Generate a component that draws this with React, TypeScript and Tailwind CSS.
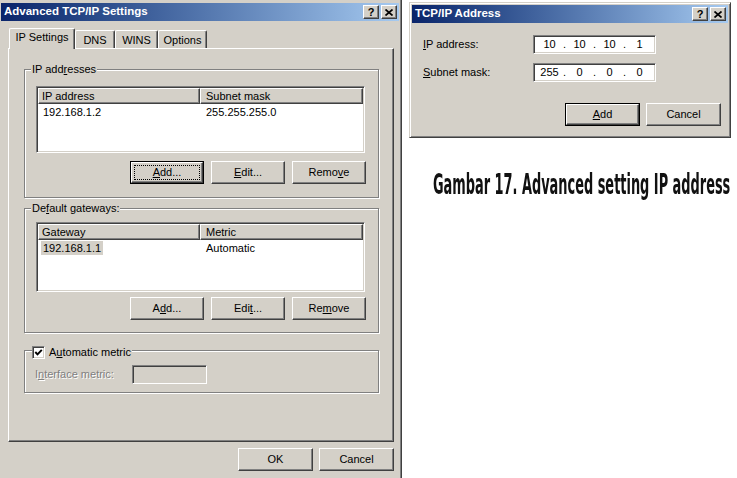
import type { ReactNode } from 'react'

const ui = "font-['Liberation_Sans',Arial,sans-serif] text-[11px] leading-[13px] text-black"
const raised =
  'border border-t-white border-l-white border-r-[#404040] border-b-[#404040] shadow-[inset_-1px_-1px_0_#808080]'
const sunken =
  'border border-t-[#808080] border-l-[#808080] border-r-white border-b-white shadow-[inset_1px_1px_0_#404040,inset_-1px_-1px_0_#d4d0c8]'
const etched = 'border border-[#808080] shadow-[inset_1px_1px_0_white,1px_1px_0_white]'

function CapBtn({ children }: { children: ReactNode }) {
  return (
    <span className={`flex h-[14px] w-[16px] items-center justify-center bg-[#d4d0c8] ${raised}`}>{children}</span>
  )
}

function TitleBar({ title }: { title: string }) {
  return (
    <div className="flex h-[18px] shrink-0 items-center bg-linear-to-r from-[#0a246a] to-[#a6caf0] pl-[3px] pr-[2px]">
      <span className="flex-1 text-[11.5px] font-bold leading-none text-white">{title}</span>
      <div className="flex gap-[2px]">
        <CapBtn>
          <span className="text-[11px] font-bold leading-none">?</span>
        </CapBtn>
        <CapBtn>
          <svg width="8" height="7" viewBox="0 0 8 7">
            <path d="M0.5 0.5 L7.5 6.5 M7.5 0.5 L0.5 6.5" stroke="#000" strokeWidth="1.7" fill="none" />
          </svg>
        </CapBtn>
      </div>
    </div>
  )
}

function Btn(props: { children: ReactNode; def?: boolean; focus?: boolean; className?: string }) {
  return (
    <button
      className={`flex h-[23px] bg-[#d4d0c8] ${props.def ? 'border border-black' : ''} ${props.className ?? 'w-[74px]'}`}
    >
      <span className={`flex flex-1 items-center justify-center ${raised}`}>
        {props.focus ? (
          <span className="m-[2px] flex flex-1 self-stretch items-center justify-center border border-dotted border-black">
            {props.children}
          </span>
        ) : (
          props.children
        )}
      </span>
    </button>
  )
}

function ListView(props: { cols: [string, string]; row: [string, string]; sel?: boolean; className: string }) {
  return (
    <div className={`flex flex-col bg-white ${sunken} ${props.className}`}>
      <div className="mx-px mt-px flex h-[16px]">
        <div className={`flex w-[162px] items-center bg-[#d4d0c8] pl-[3px] ${raised}`}>{props.cols[0]}</div>
        <div className={`flex flex-1 items-center bg-[#d4d0c8] pl-[5px] ${raised}`}>{props.cols[1]}</div>
      </div>
      <div className="mx-px mt-px flex h-[14px] items-center">
        <div className="w-[162px] pl-[3px]">
          <span className={`px-[2px] py-px ${props.sel ? 'bg-[#d4d0c8]' : ''}`}>{props.row[0]}</span>
        </div>
        <div className="flex-1 pl-[6px]">{props.row[1]}</div>
      </div>
    </div>
  )
}

function Group(props: { label: ReactNode; className: string; children: ReactNode }) {
  return (
    <div className={`relative ${etched} ${props.className}`}>
      <span className="absolute -top-[7px] left-[6px] bg-[#d4d0c8] px-px">{props.label}</span>
      {props.children}
    </div>
  )
}

function Tab(props: { label: string; active?: boolean; className: string }) {
  if (props.active) {
    return (
      <div
        className={`relative z-10 -mb-px flex h-[21px] items-center justify-center rounded-t-[2px] border-t border-l border-r border-t-white border-l-white border-r-[#404040] bg-[#d4d0c8] pb-[3px] shadow-[inset_-1px_0_0_#808080] ${props.className}`}
      >
        {props.label}
      </div>
    )
  }
  return (
    <div
      className={`flex h-[18px] items-center justify-center rounded-t-[2px] border-t border-l border-r border-t-white border-l-white border-r-[#404040] bg-[#d4d0c8] pt-[1px] shadow-[inset_-1px_0_0_#808080] ${props.className}`}
    >
      {props.label}
    </div>
  )
}

function AdvancedDialog() {
  return (
    <div className="flex h-[478px] w-[402px] shrink-0 flex-col border-r border-r-[#404040] bg-[#d4d0c8] pt-[3px] pr-[2px] pl-[1px] shadow-[inset_-1px_0_0_#808080]">
      <TitleBar title="Advanced TCP/IP Settings" />

      <div className="mt-[7px] ml-[8px] flex h-[20px] items-end">
        <Tab label="IP Settings" active className="w-[66px]" />
        <Tab label="DNS" className="w-[40px]" />
        <Tab label="WINS" className="w-[43px]" />
        <Tab label="Options" className="w-[49px]" />
      </div>

      <div className={`ml-[7px] flex h-[394px] w-[386px] flex-col pt-[20px] pr-[14px] pl-[15px] ${raised}`}>
        <Group
          className="h-[129px] pt-[16px] pr-[12px] pl-[11px]"
          label={<>IP add<u>r</u>esses</>}
        >
          <ListView className="h-[67px] w-[329px]" cols={['IP address', 'Subnet mask']} row={['192.168.1.2', '255.255.255.0']} />
          <div className="mt-[8px] flex justify-end gap-[7px]">
            <Btn def focus>
              <u>A</u>dd...
            </Btn>
            <Btn>
              <u>E</u>dit...
            </Btn>
            <Btn>
              Remo<u>v</u>e
            </Btn>
          </div>
        </Group>

        <Group
          className="mt-[10px] h-[125px] pt-[13px] pr-[12px] pl-[11px]"
          label={<>De<u>f</u>ault gateways:</>}
        >
          <ListView className="h-[70px] w-[329px]" cols={['Gateway', 'Metric']} row={['192.168.1.1', 'Automatic']} sel />
          <div className="mt-[5px] flex justify-end gap-[7px]">
            <Btn>
              A<u>d</u>d...
            </Btn>
            <Btn>
              Edi<u>t</u>...
            </Btn>
            <Btn>
              Re<u>m</u>ove
            </Btn>
          </div>
        </Group>

        <div className={`relative mt-[17px] flex h-[43px] items-start pt-[14px] pl-[10px] ${etched}`}>
          <div className="absolute -top-[5px] left-[7px] flex h-[13px] items-center gap-[4px] bg-[#d4d0c8] pr-px">
            <span className={`flex h-[13px] w-[13px] items-center justify-center bg-white ${sunken}`}>
              <svg width="9" height="9" viewBox="0 0 9 9">
                <path d="M1.3 4 L3.5 6.4 L7.8 1.8" stroke="#000" strokeWidth="1.9" fill="none" />
              </svg>
            </span>
            <span>
              A<u>u</u>tomatic metric
            </span>
          </div>
          <span className="mt-[3px] w-[97px] text-[#808080] [text-shadow:1px_1px_0_white]">
            I<u>n</u>terface metric:
          </span>
          <span className={`h-[19px] w-[75px] bg-[#d4d0c8] ${sunken}`} />
        </div>
      </div>

      <div className="mt-[6px] ml-[7px] flex w-[386px] justify-end gap-[6px]">
        <Btn className="w-[75px]">OK</Btn>
        <Btn className="w-[75px]">Cancel</Btn>
      </div>
    </div>
  )
}

function IpField({ parts }: { parts: string[] }) {
  return (
    <div className={`flex h-[19px] w-[123px] items-center bg-white pl-[3px] ${sunken}`}>
      {parts.map((p, i) => (
        <span key={i} className="flex items-center">
          {i > 0 && <span className="w-[5px] text-center">.</span>}
          <span className="w-[25px] text-center">{p}</span>
        </span>
      ))}
    </div>
  )
}

function AddressDialog() {
  return (
    <div className="ml-[7px] mt-[2px] flex h-[136px] w-[322px] flex-col border border-t-[#d4d0c8] border-l-[#d4d0c8] border-r-[#404040] border-b-[#404040] bg-[#d4d0c8] p-[2px] shadow-[inset_1px_1px_0_white,inset_-1px_-1px_0_#808080]">
      <TitleBar title="TCP/IP Address" />
      <div className="flex flex-col px-[11px]">
        <div className="mt-[12px] flex items-center">
          <span className="w-[110px]">
            <u>I</u>P address:
          </span>
          <IpField parts={['10', '10', '10', '1']} />
        </div>
        <div className="mt-[9px] flex items-center">
          <span className="w-[110px]">
            <u>S</u>ubnet mask:
          </span>
          <IpField parts={['255', '0', '0', '0']} />
        </div>
      </div>
      <div className="mt-[21px] flex justify-end gap-[6px] pr-[7px]">
        <Btn def className="w-[75px]">
          <u>A</u>dd
        </Btn>
        <Btn className="w-[75px]">Cancel</Btn>
      </div>
    </div>
  )
}

export default function App() {
  return (
    <div className={`flex h-[478px] w-[737px] overflow-hidden bg-white ${ui}`}>
      <AdvancedDialog />
      <div className="flex min-w-0 flex-col">
        <AddressDialog />
        <div className="mt-[30px] ml-[31px] h-[32px] w-[300px]">
          <span className="inline-block origin-left scale-x-[0.495] whitespace-nowrap font-['DejaVu_Sans_Condensed','DejaVu_Sans',sans-serif] text-[29px] leading-[32px] font-bold text-[#111]">
            Gambar 17. Advanced setting IP address
          </span>
        </div>
      </div>
    </div>
  )
}
